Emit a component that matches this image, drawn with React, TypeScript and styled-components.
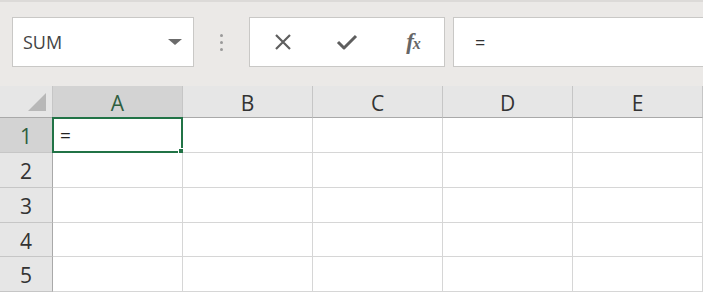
import React from 'react';
import styled, { createGlobalStyle } from 'styled-components';

const GlobalStyle = createGlobalStyle`
  html, body {
    margin: 0;
    padding: 0;
    background: #ffffff;
  }
  body {
    width: 703px;
    height: 294px;
    overflow: hidden;
    font-family: "Open Sans", "Noto Sans", "Liberation Sans", sans-serif;
  }
`;

const Toolbar = styled.div`
  height: 86px;
  box-sizing: border-box;
  border-top: 2px solid #dcdad8;
  background-color: #ebe9e7;
  display: flex;
  align-items: flex-start;
  padding: 15px 0 0 12px;
`;

const Box = styled.div<{ $width?: number; $center?: boolean }>`
  height: 50px;
  box-sizing: border-box;
  background-color: #ffffff;
  border: 1px solid #c9c8c6;
  display: flex;
  align-items: center;
  justify-content: ${(p) => (p.$center ? 'center' : 'flex-start')};
  ${(p) => (p.$width ? `width: ${p.$width}px; flex: none;` : 'flex: 1; margin-right: -4px;')}
`;

const NameText = styled.div`
  flex: 1;
  padding-left: 10px;
  font-size: 18px;
  color: #444444;
`;

const Caret = styled.div`
  width: 0;
  height: 0;
  margin-right: 11px;
  border-left: 7px solid transparent;
  border-right: 7px solid transparent;
  border-top: 6px solid #6b6b6b;
`;

const Grip = styled.div`
  width: 55px;
  height: 50px;
  display: flex;
  flex-direction: column;
  align-items: center;
  justify-content: center;
  gap: 4px;
`;

const Dot = styled.span`
  width: 3px;
  height: 3px;
  border-radius: 50%;
  background-color: #9a9a9a;
`;

const Spacer = styled.div`
  width: 8px;
  flex: none;
`;

const IconButton = styled.div`
  width: 64px;
  height: 100%;
  display: flex;
  align-items: center;
  justify-content: center;
  color: #5e5e5e;
`;

const Fx = styled.span`
  font-family: "Liberation Serif", "DejaVu Serif", serif;
  font-style: italic;
  font-weight: 600;
  font-size: 23px;
  color: #666666;
  letter-spacing: -1px;
  margin-left: 4px;
  & small {
    font-size: 16px;
  }
`;

const FormulaText = styled.div`
  padding-left: 21px;
  font-size: 18px;
  color: #333333;
`;

const Sheet = styled.div`
  display: grid;
  grid-template-columns: 53px repeat(5, 130px) 1fr;
  grid-template-rows: 32px 35px 35px 35px 34px 35px;
`;

const Corner = styled.div`
  background-color: #e6e6e6;
  border-right: 1px solid #c6c6c6;
  border-bottom: 1px solid #a9a9a9;
  display: flex;
  align-items: flex-end;
  justify-content: flex-end;
  padding: 0 6px 6px 0;
`;

const CornerTriangle = styled.div`
  width: 0;
  height: 0;
  border-left: 18px solid transparent;
  border-bottom: 18px solid #b8b8b8;
`;

const ColHead = styled.div<{ $active?: boolean }>`
  background-color: ${(p) => (p.$active ? '#d3d3d3' : '#e6e6e6')};
  border-right: 1px solid #c6c6c6;
  border-bottom: 1px solid ${(p) => (p.$active ? '#217346' : '#a9a9a9')};
  color: ${(p) => (p.$active ? '#2f5e3f' : '#333333')};
  font-size: 21px;
  display: flex;
  align-items: center;
  justify-content: center;
  padding-top: 2px;
`;

const RowHead = styled.div<{ $active?: boolean }>`
  background-color: ${(p) => (p.$active ? '#d3d3d3' : '#e6e6e6')};
  border-right: 1px solid ${(p) => (p.$active ? '#217346' : '#a9a9a9')};
  border-bottom: 1px solid #c6c6c6;
  color: ${(p) => (p.$active ? '#2f5e3f' : '#333333')};
  font-size: 21px;
  display: flex;
  align-items: center;
  justify-content: center;
  padding-top: 2px;
`;

const Cell = styled.div`
  position: relative;
  background-color: #ffffff;
  border-right: 1px solid #d6d6d6;
  border-bottom: 1px solid #d6d6d6;
  font-size: 19px;
  color: #222222;
  display: flex;
  align-items: center;
  padding-left: 7px;
`;

const Selection = styled.div`
  position: absolute;
  left: -1px;
  top: -1px;
  right: -1px;
  bottom: -1px;
  border: 2px solid #217346;
  pointer-events: none;
`;

const Handle = styled.div`
  position: absolute;
  right: -5px;
  bottom: -5px;
  width: 6px;
  height: 6px;
  background-color: #217346;
  border: 1px solid #ffffff;
`;

const columns = ['A', 'B', 'C', 'D', 'E'];
const rows = [1, 2, 3, 4, 5];

function App() {
  return (
    <>
      <GlobalStyle />
      <Toolbar>
        <Box $width={182}>
          <NameText>SUM</NameText>
          <Caret />
        </Box>
        <Grip>
          <Dot />
          <Dot />
          <Dot />
        </Grip>
        <Box $width={196} $center>
          <IconButton>
            <svg width="20" height="20" viewBox="0 0 20 20">
              <path d="M3 3 L17 17 M17 3 L3 17" stroke="currentColor" strokeWidth="2.2" fill="none" />
            </svg>
          </IconButton>
          <IconButton>
            <svg width="22" height="20" viewBox="0 0 22 20">
              <path d="M2 10 L8 16 L20 4" stroke="currentColor" strokeWidth="3" fill="none" strokeLinejoin="round" />
            </svg>
          </IconButton>
          <IconButton>
            <Fx>f<small>x</small></Fx>
          </IconButton>
        </Box>
        <Spacer />
        <Box>
          <FormulaText>=</FormulaText>
        </Box>
      </Toolbar>
      <Sheet>
        <Corner>
          <CornerTriangle />
        </Corner>
        {columns.map((c) => (
          <ColHead key={c} $active={c === 'A'}>{c}</ColHead>
        ))}
        <ColHead />
        {rows.map((r) => (
          <React.Fragment key={r}>
            <RowHead $active={r === 1}>{r}</RowHead>
            {columns.map((c) => (
              <Cell key={c}>
                {r === 1 && c === 'A' && (
                  <>
                    =
                    <Selection>
                      <Handle />
                    </Selection>
                  </>
                )}
              </Cell>
            ))}
            <Cell />
          </React.Fragment>
        ))}
      </Sheet>
    </>
  );
}

export default App;
